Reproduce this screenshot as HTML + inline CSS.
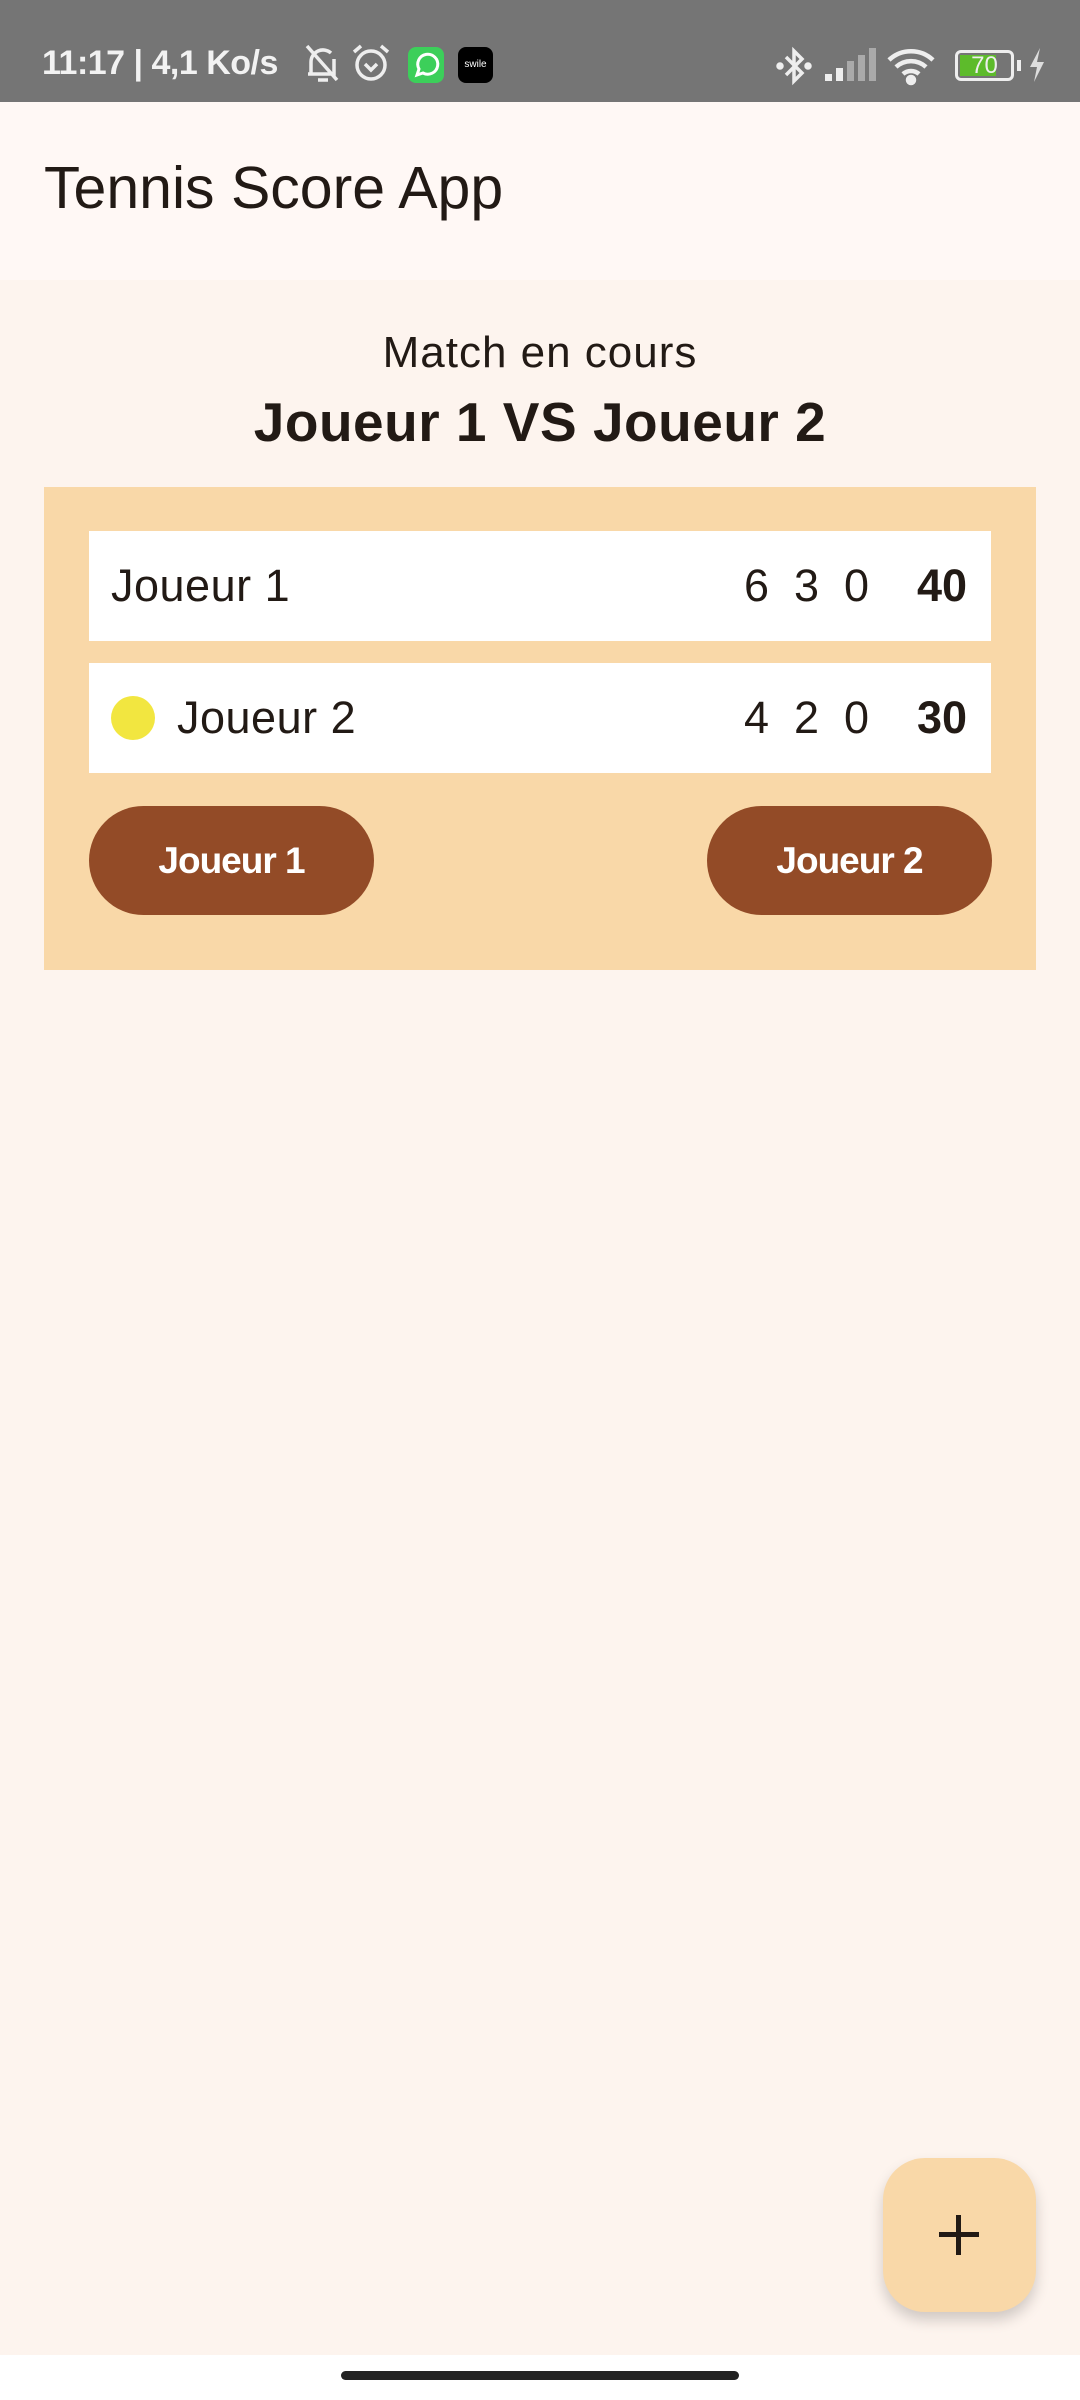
<!DOCTYPE html>
<html><head><meta charset="utf-8"><style>
*{margin:0;padding:0;box-sizing:border-box}
body{width:1080px;height:2400px;background:#FDF4EE;font-family:"Liberation Sans",sans-serif;position:relative;overflow:hidden;color:#221a15}
.abs{position:absolute}
#sb{left:0;top:0;width:1080px;height:102px;background:#757575}
#ab{left:0;top:102px;width:1080px;height:178px;background:#FFF8F5}
.row{position:absolute;left:89px;width:902px;height:110px;background:#fff;font-size:45px}
.row span{position:absolute;top:50%;transform:translateY(-50%)}
.btn{position:absolute;top:806px;width:285px;height:109px;border-radius:55px;background:#934B27;color:#fff;font-weight:bold;font-size:37px;display:flex;align-items:center;justify-content:center;letter-spacing:-1px}
</style></head><body>
<div id="sb" class="abs">
 <div class="abs" style="left:42px;top:44px;color:#f2f2f2;font-size:34px;font-weight:bold;letter-spacing:-0.5px">11:17 | 4,1 Ko/s</div>
 <svg class="abs" style="left:303px;top:42px" width="40" height="44" viewBox="0 0 40 44" fill="none" stroke="#eee" stroke-width="3.5"><path d="M8 32 V20 a12 12 0 0 1 20-9 M31 17 V32 H5 M4 4 L34 38 M15 38 h10"/></svg>
 <svg class="abs" style="left:350px;top:42px" width="42" height="42" viewBox="0 0 42 42" fill="none" stroke="#eee" stroke-width="3.5"><circle cx="21" cy="23" r="14"/><path d="M4 10 L11 4 M38 10 L31 4 M15 22 l6 6 l6-6"/></svg>
 <div class="abs" style="left:408px;top:47px;width:36px;height:36px;border-radius:8px;background:#3ccf5a"><svg width="36" height="36" viewBox="0 0 36 36" fill="none" stroke="#fff" stroke-width="3"><path d="M9 28 l2-6 a10 10 0 1 1 4 4 z"/></svg></div>
 <div class="abs" style="left:458px;top:47px;width:35px;height:36px;border-radius:8px;background:#000;color:#fff;font-size:10px;text-align:center;line-height:36px">swile</div>
 <svg class="abs" style="left:775px;top:45px" width="38" height="42" viewBox="0 0 38 42" fill="none" stroke="#eee" stroke-width="3.5"><path d="M11 12 L27 28 L19 36 V6 L27 14 L11 30"/><circle cx="5" cy="21" r="2" fill="#eee"/><circle cx="33" cy="21" r="2" fill="#eee"/></svg>
 <svg class="abs" style="left:825px;top:48px" width="52" height="34" viewBox="0 0 52 34"><rect x="0" y="26" width="7" height="7" fill="#eee"/><rect x="11" y="20" width="7" height="13" fill="#eee"/><rect x="22" y="13" width="7" height="20" fill="#aaa"/><rect x="33" y="7" width="7" height="26" fill="#aaa"/><rect x="44" y="0" width="7" height="33" fill="#aaa"/></svg>
 <svg class="abs" style="left:886px;top:46px" width="52" height="40" viewBox="0 0 52 40" fill="none" stroke="#eee" stroke-width="4.5"><path d="M3 14 a32 32 0 0 1 44 0 M10 21 a22 22 0 0 1 30 0 M17 28 a12 12 0 0 1 16 0"/><circle cx="25" cy="34" r="3" fill="#eee"/></svg>
 <div class="abs" style="left:955px;top:50px;width:59px;height:31px;border:3px solid #eee;border-radius:6px"><div style="position:absolute;left:2px;top:2px;width:36px;height:21px;background:#5dbb2b"></div><div style="position:absolute;left:0;top:-3px;width:53px;color:#eee;font-size:24px;text-align:center;line-height:31px">70</div></div>
 <div class="abs" style="left:1017px;top:60px;width:4px;height:11px;background:#eee"></div>
 <svg class="abs" style="left:1028px;top:48px" width="18" height="34" viewBox="0 0 18 34"><path d="M12 0 L2 19 H9 L6 34 L16 14 H9 Z" fill="#ddd"/></svg>
</div>
<div id="ab" class="abs"><div class="abs" style="left:44px;top:52px;font-size:59px;color:#221a15">Tennis Score App</div></div>
<div class="abs" style="left:0;top:328px;width:1080px;text-align:center;font-size:44px;letter-spacing:1px">Match en cours</div>
<div class="abs" style="left:0;top:390px;width:1080px;text-align:center;font-size:55px;font-weight:bold;letter-spacing:0.5px">Joueur 1 VS Joueur 2</div>
<div class="abs" style="left:44px;top:487px;width:992px;height:483px;background:#F9D8A8"></div>
<div class="row" style="top:531px"><span style="left:22px;letter-spacing:0.5px">Joueur 1</span><span style="left:655px">6</span><span style="left:705px">3</span><span style="left:755px">0</span><span style="left:828px;font-weight:bold">40</span></div>
<div class="row" style="top:663px"><div style="position:absolute;left:22px;top:33px;width:44px;height:44px;border-radius:50%;background:#F2E640"></div><span style="left:88px;letter-spacing:0.5px">Joueur 2</span><span style="left:655px">4</span><span style="left:705px">2</span><span style="left:755px">0</span><span style="left:828px;font-weight:bold">30</span></div>
<div class="btn" style="left:89px">Joueur 1</div>
<div class="btn" style="left:707px">Joueur 2</div>
<div class="abs" style="left:883px;top:2158px;width:153px;height:154px;border-radius:42px;background:#F9D8A8;box-shadow:0 8px 14px rgba(0,0,0,0.18)">
 <div class="abs" style="left:56px;top:74px;width:40px;height:5px;background:#221a15"></div>
 <div class="abs" style="left:73px;top:57px;width:5px;height:40px;background:#221a15"></div>
</div>
<div class="abs" style="left:0;top:2355px;width:1080px;height:45px;background:#fff"></div>
<div class="abs" style="left:341px;top:2371px;width:398px;height:9px;border-radius:5px;background:#222"></div>
</body></html>
